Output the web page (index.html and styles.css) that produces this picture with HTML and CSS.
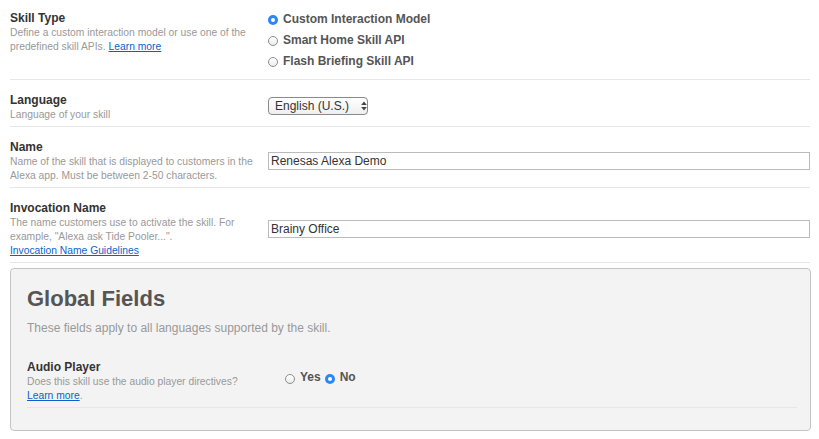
FILE: index.html
```html
<!DOCTYPE html>
<html>
<head>
<meta charset="utf-8">
<link rel="stylesheet" href="styles.css">
</head>
<body>
<div class="page">
  <div class="row row-first">
    <div class="left left-first">
      <div class="title">Skill Type</div>
      <div class="desc">Define a custom interaction model or use one of the predefined skill APIs.<a href="#" class="link link-after">Learn more</a></div>
    </div>
    <div class="right">
      <div class="radio-list">
        <label class="radio-item"><span class="radio checked"></span><span class="rlabel">Custom Interaction Model</span></label>
        <label class="radio-item"><span class="radio"></span><span class="rlabel">Smart Home Skill API</span></label>
        <label class="radio-item"><span class="radio"></span><span class="rlabel">Flash Briefing Skill API</span></label>
      </div>
    </div>
  </div>

  <div class="row">
    <div class="left">
      <div class="title">Language</div>
      <div class="desc">Language of your skill</div>
    </div>
    <div class="right">
      <div class="select">
        <span class="select-text">English (U.S.)</span>
        <svg class="select-arrows" width="6" height="10" viewBox="0 0 6 10"><path d="M3 0.5 L5.8 4 L0.2 4 Z" fill="#444"/><path d="M3 9.5 L5.8 6 L0.2 6 Z" fill="#444"/></svg>
      </div>
    </div>
  </div>

  <div class="row">
    <div class="left">
      <div class="title">Name</div>
      <div class="desc">Name of the skill that is displayed to customers in the Alexa app. Must be between 2-50 characters.</div>
    </div>
    <div class="right">
      <input class="text-input" type="text" value="Renesas Alexa Demo">
    </div>
  </div>

  <div class="row">
    <div class="left">
      <div class="title">Invocation Name</div>
      <div class="desc">The name customers use to activate the skill. For example, "Alexa ask Tide Pooler...".<br><a href="#" class="link">Invocation Name Guidelines</a></div>
    </div>
    <div class="right">
      <input class="text-input" type="text" value="Brainy Office">
    </div>
  </div>

  <div class="panel">
    <h2 class="panel-title">Global Fields</h2>
    <p class="panel-desc">These fields apply to all languages supported by the skill.</p>
    <div class="row panel-row">
      <div class="left">
        <div class="title">Audio Player</div>
        <div class="desc">Does this skill use the audio player directives?<br><a href="#" class="link">Learn more</a>.</div>
      </div>
      <div class="right right-inline">
        <label class="radio-item inline"><span class="radio"></span><span class="rlabel">Yes</span></label>
        <label class="radio-item inline"><span class="radio checked"></span><span class="rlabel">No</span></label>
      </div>
    </div>
  </div>
</div>
</body>
</html>
```

FILE: styles.css
```css
html, body {
  margin: 0;
  padding: 0;
  background: #ffffff;
}

body {
  font-family: "Liberation Sans", Arial, Helvetica, sans-serif;
  color: #333333;
}

.page {
  width: 800px;
  margin-left: 10px;
}

.row {
  display: flex;
  align-items: center;
  padding: 12px 0 4px;
  border-bottom: 1px solid #e7e7e7;
}

.row-first {
  align-items: flex-start;
  padding: 8px 0 8px;
}

.left {
  box-sizing: border-box;
  width: 258px;
  padding-right: 8px;
  flex: none;
}

.left-first {
  padding-top: 2px;
}

.right {
  flex: 1;
  min-width: 0;
}

.title {
  font-size: 12px;
  font-weight: bold;
  line-height: 16px;
  color: #333333;
}

.desc {
  font-size: 10.3px;
  line-height: 14px;
  color: #999999;
}

.link {
  color: #0a62c9;
  text-decoration: underline;
}

.link-after {
  margin-left: 3px;
}

.radio-list {
  display: flex;
  flex-direction: column;
}

.radio-item {
  display: flex;
  align-items: center;
  height: 21px;
}

.radio-item.inline {
  display: inline-flex;
  margin-right: 4px;
}

.radio {
  box-sizing: border-box;
  width: 10px;
  height: 10px;
  border-radius: 50%;
  border: 1px solid #8d8d8d;
  background: linear-gradient(#ffffff, #ececec);
  margin-top: 3px;
  flex: none;
  position: relative;
}

.radio.checked {
  border: none;
  background: #2b87f5;
}

.radio.checked::after {
  content: "";
  position: absolute;
  left: 3px;
  top: 3px;
  width: 4px;
  height: 4px;
  border-radius: 50%;
  background: #ffffff;
}

.rlabel {
  margin-left: 5px;
  font-size: 12px;
  font-weight: bold;
  color: #555555;
}

.select {
  box-sizing: border-box;
  width: 100px;
  height: 18px;
  border: 1px solid #8a8a8a;
  border-radius: 4px;
  background: linear-gradient(#ffffff, #efefef);
  display: flex;
  align-items: center;
  padding-left: 6px;
  margin-top: -2px;
  white-space: nowrap;
}

.select-text {
  flex: none;
  font-size: 12px;
  color: #333333;
}

.select-arrows {
  flex: none;
  margin-left: 12px;
}

.text-input {
  box-sizing: border-box;
  display: block;
  width: 542px;
  height: 18px;
  border: 1px solid #bbbbbb;
  border-radius: 0;
  padding: 0 2px;
  margin: 0;
  font-family: "Liberation Sans", Arial, Helvetica, sans-serif;
  font-size: 12px;
  color: #333333;
  background: #ffffff;
  outline: none;
}

.panel {
  margin-top: 5px;
  box-sizing: border-box;
  width: 801px;
  border: 1px solid #c4c4c4;
  border-radius: 4px;
  background: #f3f3f3;
  padding: 17px 13px 22px 16px;
}

.panel-title {
  margin: 0;
  font-size: 22px;
  line-height: 26px;
  font-weight: bold;
  color: #555555;
}

.panel-desc {
  margin: 8px 0 0;
  font-size: 12px;
  line-height: 16px;
  color: #999999;
}

.panel-row {
  margin-top: 23px;
  padding: 0 0 4px;
}

.right-inline {
  display: flex;
  align-items: center;
  margin-bottom: 8px;
}
```
